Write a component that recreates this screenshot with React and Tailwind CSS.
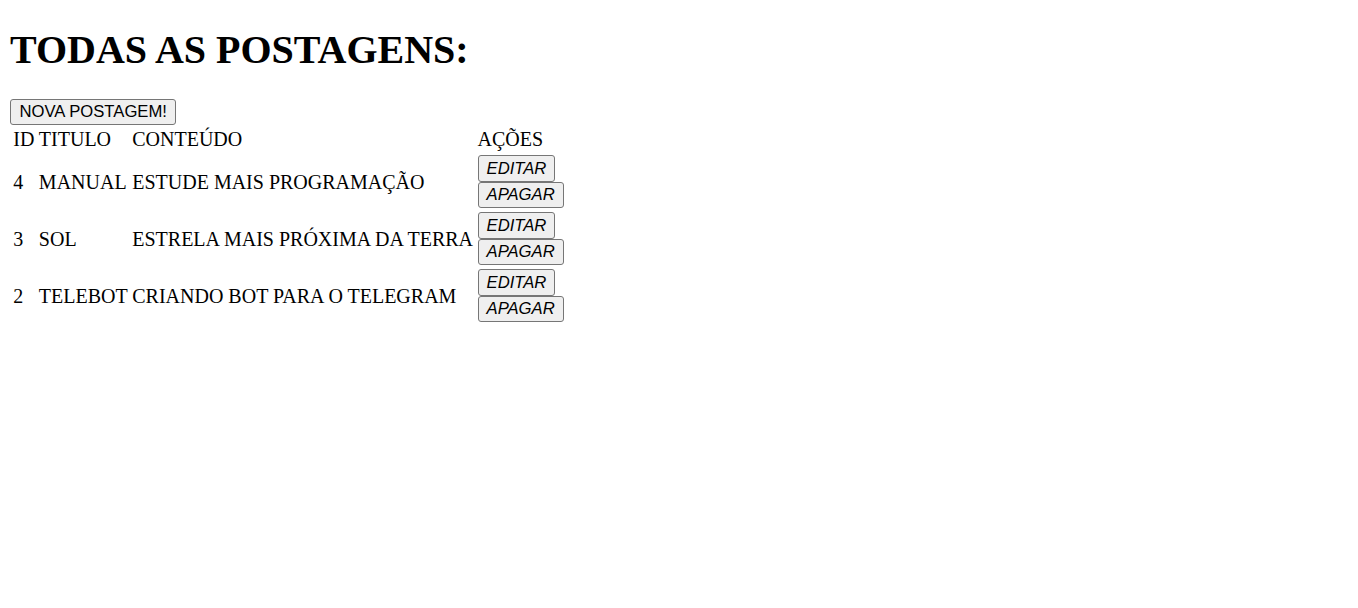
import React from 'react';

const posts = [
  { id: 4, titulo: 'MANUAL', conteudo: 'ESTUDE MAIS PROGRAMAÇÃO' },
  { id: 3, titulo: 'SOL', conteudo: 'ESTRELA MAIS PRÓXIMA DA TERRA' },
  { id: 2, titulo: 'TELEBOT', conteudo: 'CRIANDO BOT PARA O TELEGRAM' },
];

const btn =
  "block border border-[#767676] bg-[#efefef] rounded-[3px] text-[16.67px] leading-[19px] text-black font-['Liberation_Sans',Arial,sans-serif] cursor-default";

export default function App() {
  return (
    <div className="min-h-screen bg-white px-[10px] text-black font-['Liberation_Serif','Times_New_Roman',serif]">
      <h1 className="pt-[27px] mb-[26px] text-[40px] leading-[46px] font-bold">TODAS AS POSTAGENS:</h1>

      <div>
        <button className={btn + ' h-[25.5px] px-[8.5px]'}>NOVA POSTAGEM!</button>
      </div>

      <table className="border-separate border-spacing-[2.5px] text-[20px] leading-[23px]">
        <thead>
          <tr>
            <td className="p-[1.25px] text-left">ID</td>
            <td className="p-[1.25px] text-left">TITULO</td>
            <td className="p-[1.25px] text-left">CONTEÚDO</td>
            <td className="p-[1.25px] text-left">AÇÕES</td>
          </tr>
        </thead>
        <tbody>
          {posts.map((post) => (
            <tr key={post.id}>
              <td className="p-[1.25px] pt-[3px] align-middle">{post.id}</td>
              <td className="p-[1.25px] pt-[3px] align-middle">{post.titulo}</td>
              <td className="p-[1.25px] pt-[3px] align-middle">{post.conteudo}</td>
              <td className="p-[1.25px] align-middle">
                <div className="flex flex-col items-start">
                  <button className={btn + ' h-[26.25px] px-[8px] italic'}>EDITAR</button>
                  <button className={btn + ' h-[26.25px] px-[8px] italic'}>APAGAR</button>
                </div>
              </td>
            </tr>
          ))}
        </tbody>
      </table>
    </div>
  );
}
